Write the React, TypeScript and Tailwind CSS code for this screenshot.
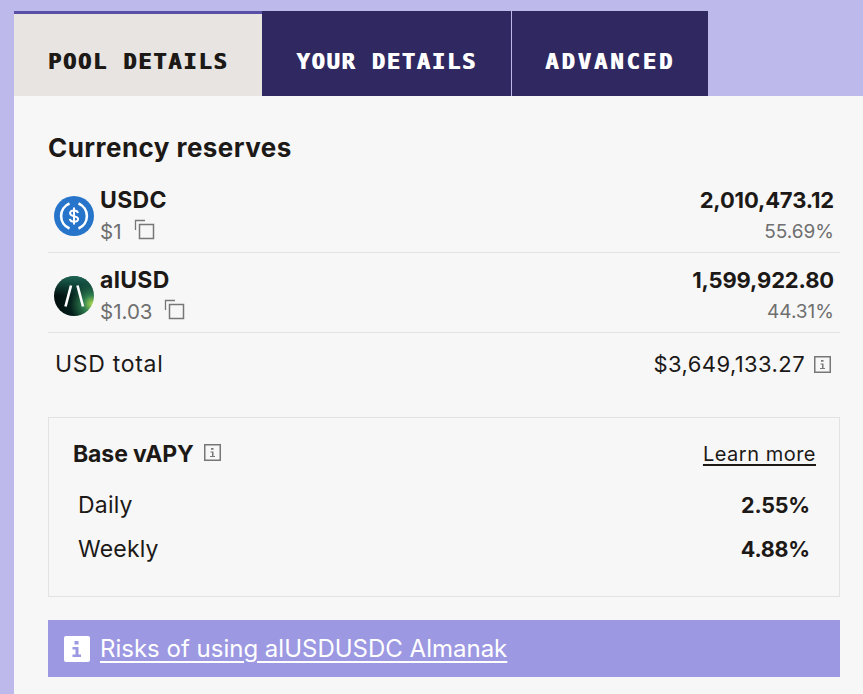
import type { ReactNode } from 'react';

function InfoBox() {
  return (
    <svg width="17" height="17" viewBox="0 0 17 17" fill="none" className="shrink-0">
      <rect x="0.75" y="0.75" width="15.5" height="15.5" stroke="#777777" strokeWidth="1.5" />
      <path d="M7 4h2.5v1.8H7zM6.5 7.5h3v4.5h1.5v1H6v-1h2v-3.5H6.5z" fill="#777777" />
    </svg>
  );
}

function CopyIcon() {
  return (
    <svg width="22" height="22" viewBox="0 0 22 22" fill="none" className="-mt-[2px] shrink-0">
      <path d="M1.5 11V1.5H11" stroke="#777777" strokeWidth="1.3" />
      <rect x="5.5" y="5.5" width="14" height="14" stroke="#777777" strokeWidth="1.5" />
    </svg>
  );
}

function UsdcLogo() {
  return (
    <svg width="40" height="40" viewBox="0 0 40 40" className="shrink-0">
      <circle cx="20" cy="20" r="20" fill="#2775ca" />
      <path d="M15.5 7.5a13.500 13.500 0 0 0 0 25M24.5 7.500a13.500 13.500 0 0 1 0 25" stroke="#ffffff" strokeWidth="2.6" fill="none" />
      <path d="M24 17c-.4-1.800-2-2.600-4-2.600-2.400 0-3.900 1.100-3.900 2.800 0 4 8 2 8 5.700 0 1.700-1.700 2.700-4.100 2.700-2.300 0-3.900-.9-4.200-2.800" stroke="#ffffff" strokeWidth="2" fill="none" />
      <path d="M20 11.500v17" stroke="#ffffff" strokeWidth="2" />
    </svg>
  );
}

function AlLogo() {
  return (
    <svg width="40" height="40" viewBox="0 0 40 40" className="shrink-0">
      <defs>
        <radialGradient id="al" cx="0.95" cy="0.7" r="1">
          <stop offset="0" stopColor="#a6d84f" />
          <stop offset="0.22" stopColor="#2f7d4f" />
          <stop offset="0.55" stopColor="#04201c" />
          <stop offset="1" stopColor="#020c0c" />
        </radialGradient>
        <linearGradient id="alTop" x1="0" y1="0" x2="0" y2="1">
          <stop offset="0" stopColor="#1f6f5c" stopOpacity="0.9" />
          <stop offset="0.5" stopColor="#1f6f5c" stopOpacity="0" />
        </linearGradient>
      </defs>
      <circle cx="20" cy="20" r="20" fill="url(#al)" />
      <circle cx="20" cy="20" r="20" fill="url(#alTop)" />
      <path d="M17 9.500 11.500 30.500M23.500 9.500 29 30.500" stroke="#ffffff" strokeWidth="2.600" />
    </svg>
  );
}

function Tab({ label, active, className }: { label: string; active?: boolean; className: string }) {
  return (
    <div
      className={
        'flex h-[85px] items-center justify-center font-["DejaVu_Sans_Mono",monospace] text-[22px] font-bold [text-shadow:1px_0_0_currentColor] ' +
        (active ? 'border-t-[3px] border-[#5a4fa6] bg-[#e7e4e1] pt-[12px] text-[#1c1917] ' : 'bg-[#302861] pt-[15px] text-white ') +
        className
      }
    >
      {label}
    </div>
  );
}

function TokenRow({ logo, name, price, amount, share }: { logo: ReactNode; name: string; price: string; amount: string; share: string }) {
  return (
    <div className="flex h-[80px] items-center gap-[6px] border-b border-[#e3e3e3] pl-[6px] pr-[6px] pt-[6px]">
      {logo}
      <div className="flex-1">
        <div className="text-[23px] font-bold leading-[31px] tracking-[0.3px] text-[#1c1917]">{name}</div>
        <div className="flex items-center gap-[12px] text-[20.500px] leading-[31px] text-[#6f6f6f]">
          {price}
          <CopyIcon />
        </div>
      </div>
      <div className="text-right">
        <div className="text-[22px] font-bold leading-[31px] tracking-[-0.15px] text-[#1c1917]">{amount}</div>
        <div className="text-[19px] leading-[31px] text-[#6f6f6f]">{share}</div>
      </div>
    </div>
  );
}

export default function App() {
  return (
    <div className='h-[694px] w-[863px] overflow-hidden bg-[#bdb9eb] pl-[14px] pt-[11px] font-["Inter",sans-serif]'>
      <div className="flex">
        <Tab label="POOL DETAILS" active className="w-[248px] tracking-[1.800px]" />
        <Tab label="YOUR DETAILS" className="w-[250px] border-r border-[#bdb9eb] tracking-[1.800px]" />
        <Tab label="ADVANCED" className="w-[196px] tracking-[3px]" />
      </div>
      <div className="h-[598px] bg-[#f7f7f7] pl-[34px] pr-[23px] pt-[35px]">
        <h2 className="text-[26px] font-bold leading-[34px] tracking-[0.45px] text-[#1c1917]">Currency reserves</h2>
        <div className="mt-[8px]">
          <TokenRow logo={<UsdcLogo />} name="USDC" price="$1" amount="2,010,473.12" share="55.69%" />
          <TokenRow logo={<AlLogo />} name="alUSD" price="$1.03" amount="1,599,922.80" share="44.31%" />
        </div>
        <div className="flex h-[62px] items-center justify-between pl-[7px] pr-[9px] text-[22px] text-[#1c1917]">
          <span className="text-[23px] tracking-[0.7px]">USD total</span>
          <span className="flex items-center gap-[9px] tracking-[0.4px]">
            $3,649,133.27
            <InfoBox />
          </span>
        </div>
        <div className="mt-[22px] h-[180px] border border-[#e5e3e1] pl-[24px] pr-[23px] pt-[21px]">
          <div className="flex items-center justify-between">
            <div className="flex items-center gap-[10px]">
              <span className="text-[23px] font-bold leading-[30px] tracking-[-0.1px] text-[#1c1917]">Base vAPY</span>
              <span className="-mt-[3px]">
                <InfoBox />
              </span>
            </div>
            <a className="text-[20px] leading-[30px] tracking-[0.5px] text-[#1c1917] underline underline-offset-[3px]">Learn more</a>
          </div>
          <div className="mt-[21px] flex flex-col gap-[14px] pl-[5px] pr-[6px] leading-[30px] text-[#1c1917]">
            <div className="flex items-center justify-between">
              <span className="text-[23px] tracking-[0.2px]">Daily</span>
              <span className="text-[21.500px] font-bold tracking-[-0.2px]">2.55%</span>
            </div>
            <div className="flex items-center justify-between">
              <span className="text-[23px] tracking-[0.2px]">Weekly</span>
              <span className="text-[21.500px] font-bold tracking-[-0.2px]">4.88%</span>
            </div>
          </div>
        </div>
        <div className="mt-[23px] flex h-[57px] items-center gap-[10px] bg-[#9c98e2] pl-[16px] text-[24px] text-white">
          <svg width="26" height="26" viewBox="0 0 26 26" className="shrink-0">
            <rect width="26" height="26" rx="2" fill="#ffffff" />
            <path d="M10.500 5h4v3.500h-4zM8.500 11h6v7.500h2.500V21H8.500v-2.500h3v-5h-3z" fill="#9c98e2" />
          </svg>
          <a className="underline underline-offset-[4px]">Risks of using alUSDUSDC Almanak</a>
        </div>
      </div>
    </div>
  );
}
